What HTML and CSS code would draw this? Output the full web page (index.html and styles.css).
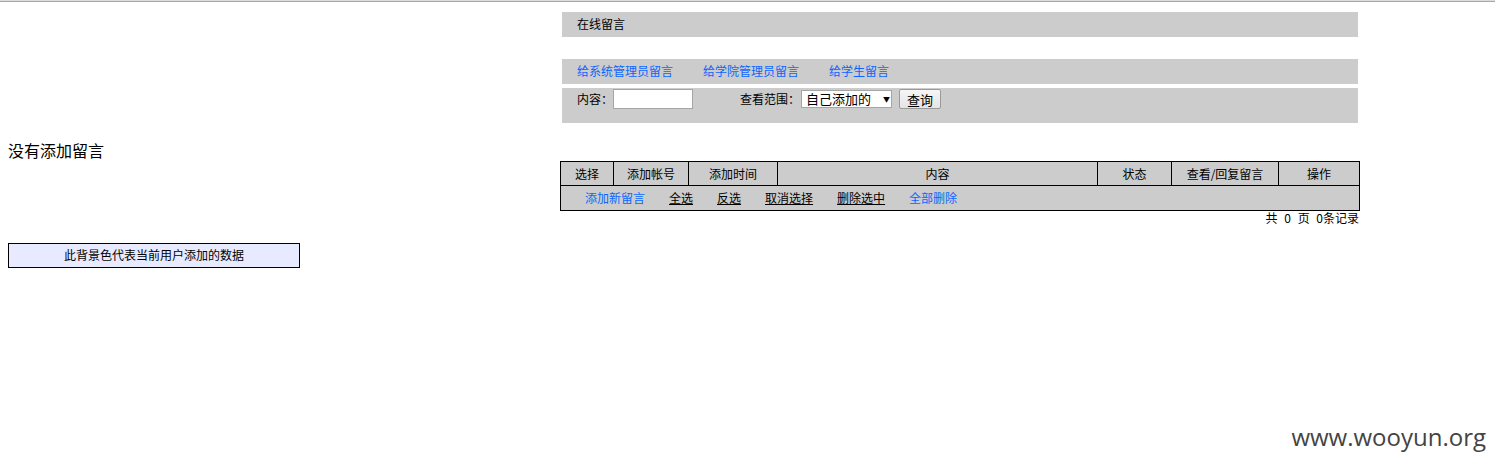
FILE: index.html
```html
<!DOCTYPE html>
<html lang="zh-CN">
<head>
<meta charset="utf-8">
<title>在线留言</title>
<link rel="stylesheet" href="styles.css">
</head>
<body>
<div class="topline"></div>
<div class="page">
  <div class="left">
    <div class="empty">没有添加留言</div>
    <div class="legend">此背景色代表当前用户添加的数据</div>
  </div>
  <div class="main">
    <div class="bar title">在线留言</div>
    <div class="bar links">
      <a href="#" class="blue">给系统管理员留言</a>
      <a href="#" class="blue">给学院管理员留言</a>
      <a href="#" class="blue">给学生留言</a>
    </div>
    <div class="bar search">
      <label class="field">内容：<input type="text" class="txt"></label>
      <label class="field range">查看范围：<span class="select">自己添加的<span class="arrow">▼</span></span></label>
      <button class="btn" type="button">查询</button>
    </div>
    <table class="grid">
      <colgroup>
        <col class="c1"><col class="c2"><col class="c3"><col class="c4"><col class="c5"><col class="c6"><col class="c7">
      </colgroup>
      <tr class="head">
        <td>选择</td><td>添加帐号</td><td>添加时间</td><td>内容</td><td>状态</td><td>查看/回复留言</td><td>操作</td>
      </tr>
      <tr class="actions">
        <td colspan="7">
          <div class="acts">
            <a href="#" class="blue">添加新留言</a>
            <a href="#" class="ul">全选</a>
            <a href="#" class="ul">反选</a>
            <a href="#" class="ul">取消选择</a>
            <a href="#" class="ul">删除选中</a>
            <a href="#" class="blue">全部删除</a>
          </div>
        </td>
      </tr>
    </table>
    <div class="pager">共 0 页 0条记录</div>
  </div>
</div>
<div class="watermark">www.wooyun.org</div>
</body>
</html>
```

FILE: styles.css
```css
html, body {
  margin: 0;
  padding: 0;
  background: #fff;
}
body {
  font-family: "Noto Sans CJK SC", "Liberation Sans", sans-serif;
  font-size: 12px;
  color: #000;
  min-height: 469px;
  position: relative;
}
.topline {
  height: 1px;
  border-top: 1px solid #dcdcdc;
  background: #a8a8a8;
}
.page {
  display: flex;
  align-items: flex-start;
}
.left {
  width: 552px;
  padding-left: 8px;
  padding-top: 138px;
}
.empty {
  font-size: 16px;
  line-height: 20px;
}
.legend {
  margin-top: 83px;
  width: 290px;
  height: 23px;
  line-height: 22px;
  border: 1px solid #000;
  background: #e8eaff;
  text-align: center;
}
.main {
  width: 800px;
  padding-top: 10px;
}
.bar {
  margin: 0 2px;
  background: #cccccc;
  padding-left: 15px;
}
.title {
  height: 25px;
  line-height: 23px;
}
.links {
  margin-top: 22px;
  height: 25px;
  display: flex;
  align-items: center;
  gap: 30px;
  padding-bottom: 2px;
  box-sizing: border-box;
}
a {
  text-decoration: none;
  color: #000;
}
a.blue {
  color: #0a66ff;
}
a.ul {
  text-decoration: underline;
}
.search {
  margin-top: 4px;
  height: 34px;
  padding-top: 1px;
  display: flex;
  align-items: flex-start;
}
.field {
  display: flex;
  align-items: center;
  height: 20px;
  line-height: 18px;
}
.txt {
  box-sizing: border-box;
  width: 80px;
  height: 20px;
  margin: 0;
  border: 1px solid #a5a5a5;
  background: #fff;
  padding: 0 2px;
}
.range {
  margin-left: 47px;
}
.select {
  box-sizing: border-box;
  display: flex;
  align-items: center;
  width: 91px;
  height: 18px;
  margin-left: 1px;
  border: 1px solid #a5a5a5;
  background: #fff;
  padding-left: 4px;
  font-size: 13px;
}
.arrow {
  font-size: 7px;
  margin-left: 12px;
}
.btn {
  box-sizing: border-box;
  width: 42px;
  height: 20px;
  margin: 0 0 0 7px;
  padding: 0;
  border: 1px solid #9a9a9a;
  border-radius: 2px;
  background: linear-gradient(#f6f6f6, #e4e4e4);
  font-family: inherit;
  font-size: 13px;
  line-height: 17px;
  color: #000;
}
.grid {
  margin-top: 38px;
  width: 800px;
  border-collapse: collapse;
  table-layout: fixed;
  background: #cccccc;
  border: 1px solid #000;
}
.grid td {
  padding: 0;
  border: 1px solid #000;
  text-align: center;
  line-height: 18px;
}
.c1 { width: 53px; }
.c2 { width: 75px; }
.c3 { width: 89px; }
.c4 { width: 320px; }
.c5 { width: 74px; }
.c6 { width: 107px; }
.c7 { width: 81px; }
.head td {
  height: 23px;
}
.actions td {
  height: 23px;
  text-align: left;
  padding-bottom: 1px;
}
.acts {
  display: flex;
  gap: 24px;
  padding-left: 24px;
}
.pager {
  text-align: right;
  line-height: 13px;
  padding-right: 1px;
  word-spacing: 4px;
}
.watermark {
  position: absolute;
  right: 9px;
  top: 420px;
  font-family: "Open Sans", "Noto Sans", sans-serif;
  font-size: 24px;
  color: #444;
}
```
